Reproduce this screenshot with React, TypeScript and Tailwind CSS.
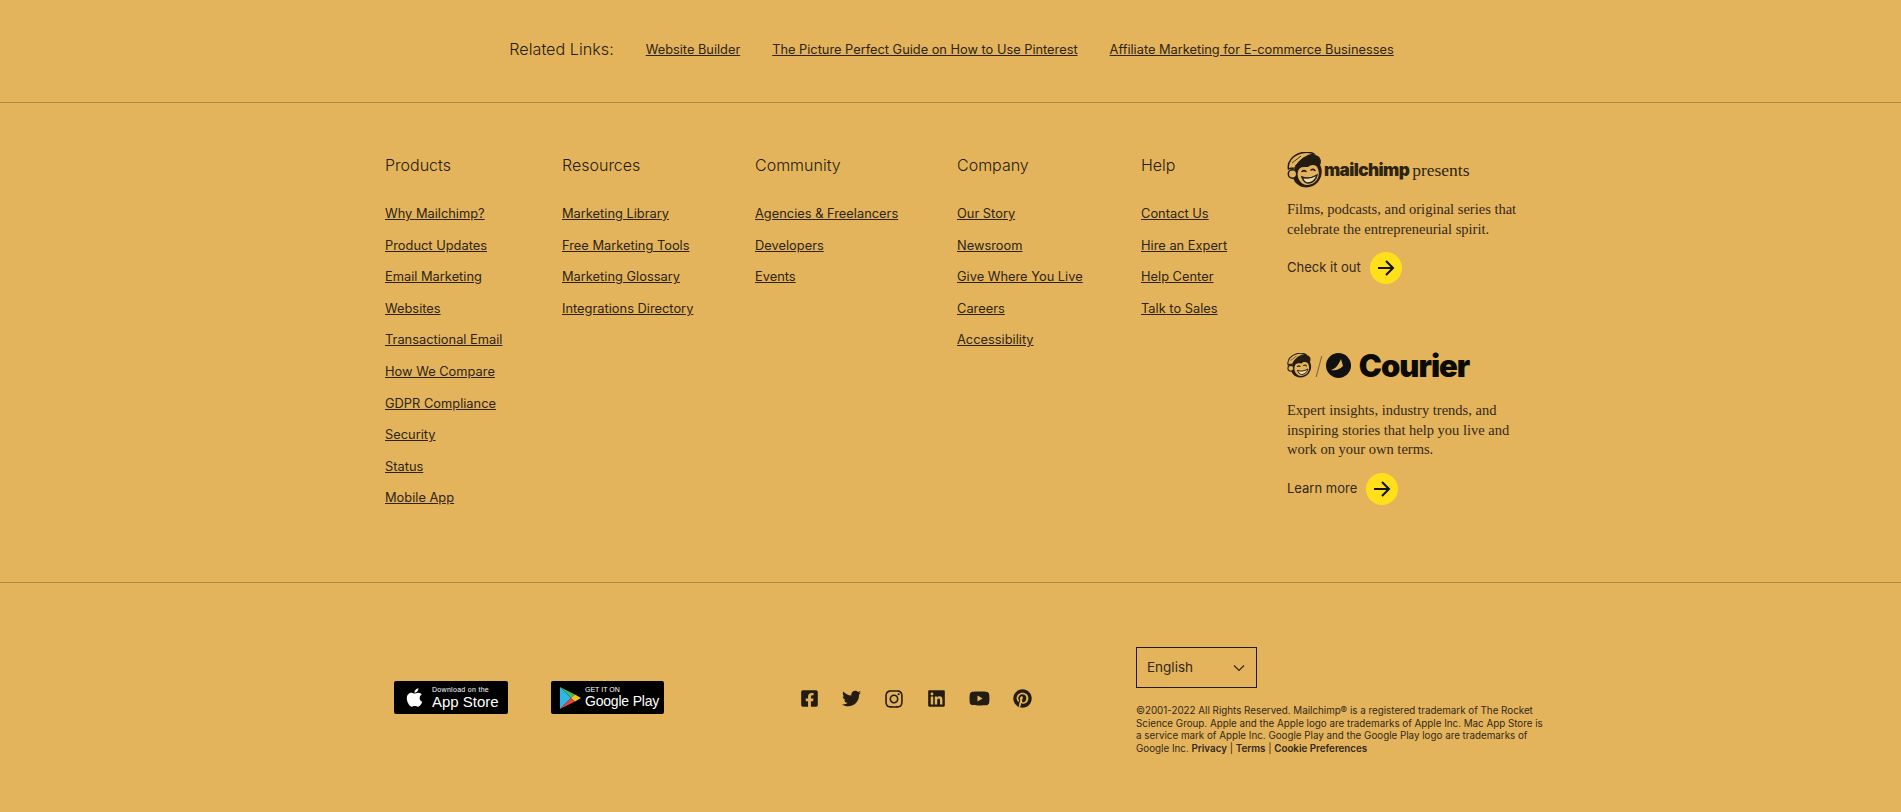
import React from 'react';
import { FaApple, FaFacebookSquare, FaTwitter, FaInstagram, FaLinkedin, FaYoutube, FaPinterest } from 'react-icons/fa';

const columns = [
  { title: 'Products', width: 'w-[177px]', links: ['Why Mailchimp?', 'Product Updates', 'Email Marketing', 'Websites', 'Transactional Email', 'How We Compare', 'GDPR Compliance', 'Security', 'Status', 'Mobile App'] },
  { title: 'Resources', width: 'w-[193px]', links: ['Marketing Library', 'Free Marketing Tools', 'Marketing Glossary', 'Integrations Directory'] },
  { title: 'Community', width: 'w-[202px]', links: ['Agencies & Freelancers', 'Developers', 'Events'] },
  { title: 'Company', width: 'w-[184px]', links: ['Our Story', 'Newsroom', 'Give Where You Live', 'Careers', 'Accessibility'] },
  { title: 'Help', width: 'w-[146px]', links: ['Contact Us', 'Hire an Expert', 'Help Center', 'Talk to Sales'] },
];

// mailchimp's monkey, cap on the upper left and dark head behind the face
const Freddie = ({ size }: { size: number }) => (
  <svg width={size} height={size} viewBox="0 0 36 36">
    <path d="M9 12C14 3 25 1 31 4C35 7 34 11 33 13C36 18 35 25 31 30C27 35 19 37 13 34C9 32 7 29 6 26Z" fill="#241c10" />
    <path d="M1.500 17C0 10 6 3 14 1C19 0 24 0 27 2C20 3 12 8 8 16C6 16 3 16 1.500 17Z" fill="#e4b45c" stroke="#241c10" strokeWidth="1.500" />
    <path d="M5 11L14 4M8 14L18 5" stroke="#241c10" strokeWidth="0.800" />
    <circle cx="5.500" cy="22" r="4.200" fill="#e4b45c" stroke="#241c10" strokeWidth="1.500" />
    <path d="M11 19C13 14 17 15 21 15C24 12 30 12 31 17C34 24 29 33 20 33C15 33 9 27 11 19Z" fill="#e4b45c" />
    <path d="M15 19.500q2-1.800 4 0M24 18q2-1.500 4 .5" fill="none" stroke="#241c10" strokeWidth="1.500" strokeLinecap="round" />
    <path d="M15 25C20 27 25 26 30 23C29 28 25 31 21 31C18 31 16 28 15 25Z" fill="#efdcae" stroke="#241c10" strokeWidth="1.400" />
  </svg>
);

const ArrowCircle = () => (
  <span className="flex h-8 w-8 items-center justify-center rounded-full bg-[#ffe01b]">
    <svg width="20" height="18" viewBox="0 0 20 18" fill="none" stroke="#111" strokeWidth="2">
      <path d="M2 9h15M10 2l7 7-7 7" />
    </svg>
  </span>
);

const GooglePlayMark = () => (
  <svg width="22" height="24" viewBox="0 0 22 24">
    <path d="M1 1L12 12L1 23Z" fill="#2fb5e8" />
    <path d="M1 1L16 8.500L12 12Z" fill="#41b96b" />
    <path d="M1 23L16 15.500L12 12Z" fill="#e8433f" />
    <path d="M16 8.500L22 12L16 15.500L12 12Z" fill="#f9c022" />
  </svg>
);

const serif = "font-['Liberation_Serif',serif]";

export default function App() {
  return (
    <div className="min-h-[812px] bg-[#e4b45c] font-['Inter',sans-serif] text-[#2e2414]">
      <div className="flex h-[103px] items-start justify-center border-b border-[#b08c4a] pt-[38px] pl-[2px]">
        <span className="mr-[32px] text-[16.2px] leading-[22px] font-light text-[#241c10]">Related Links:</span>
        <a className="mr-[32px] pt-[2px] text-[12.8px] leading-[20px] underline">Website Builder</a>
        <a className="mr-[32px] pt-[2px] text-[12.8px] leading-[20px] underline">The Picture Perfect Guide on How to Use Pinterest</a>
        <a className="pt-[2px] text-[12.8px] leading-[20px] underline">Affiliate Marketing for E-commerce Businesses</a>
      </div>

      <div className="h-[480px] border-b border-[#b08c4a]">
        <div className="mx-auto flex w-[1131px] pt-[49px]">
          {columns.map((col) => (
            <div key={col.title} className={`${col.width} shrink-0`}>
              <h3 className="mb-[26px] text-[16px] leading-[26px] font-light text-[#241c10]">{col.title}</h3>
              <ul className="flex flex-col gap-[11.6px]">
                {col.links.map((link) => (
                  <li key={link} className="text-[12.85px] leading-[20px] underline">{link}</li>
                ))}
              </ul>
            </div>
          ))}

          <div className="w-[240px] shrink-0">
            <div className="flex h-[36px] items-center">
              <Freddie size={36} />
              <span className="ml-[1px] text-[17.2px] font-black tracking-[-0.6px]">mailchimp</span>
              <span className={`${serif} ml-[3px] text-[17.5px]`}>presents</span>
            </div>
            <p className={`${serif} mt-[11px] text-[14.5px] leading-[20px] text-[#33281a]`}>
              Films, podcasts, and original series that celebrate the entrepreneurial spirit.
            </p>
            <div className="mt-[12.5px] flex h-[32px] items-center gap-[9px] text-[13px] text-[#33281a]">
              <span>Check it out</span>
              <ArrowCircle />
            </div>

            <div className="mt-[68px] flex h-[28px] items-center">
              <Freddie size={25} />
              <span className="mx-[3px] text-[24px] font-thin leading-none">/</span>
              <svg width="25" height="25" viewBox="0 0 25 25" className="mr-[8px]">
                <circle cx="12.500" cy="12.500" r="12.500" fill="#111" />
                <path d="M5 17C9 16 12 13 15 6L17 13C14 16 10 18 5 17Z" fill="#e4b45c" />
              </svg>
              <span className="text-[31px] leading-none font-black tracking-[-1px] text-[#0c0a05]">Courier</span>
            </div>
            <p className={`${serif} mt-[21.5px] w-[236px] text-[14.5px] leading-[19.6px] text-[#33281a]`}>
              Expert insights, industry trends, and inspiring stories that help you live and work on your own terms.
            </p>
            <div className="mt-[13px] flex h-[32px] items-center gap-[9px] text-[13px] text-[#33281a]">
              <span>Learn more</span>
              <ArrowCircle />
            </div>
          </div>
        </div>
      </div>

      <div className="mx-auto flex w-[1131px] items-start pt-[64px]">
        <div className="mt-[34px] flex shrink-0 pl-[9px]">
          <div className="flex h-[33px] w-[114px] items-center rounded-[2px] bg-black pl-[10px] text-white">
            <FaApple className="text-[21px]" />
            <div className="ml-[7px] flex flex-col font-['Liberation_Sans',sans-serif]">
              <span className="text-[7px] leading-[8px] tracking-[0.3px]">Download on the</span>
              <span className="text-[15px] leading-[15px]">App Store</span>
            </div>
          </div>
          <div className="ml-[43px] flex h-[33px] w-[113px] items-center rounded-[2px] bg-black pl-[8px] text-white">
            <GooglePlayMark />
            <div className="ml-[4px] flex flex-col font-['Liberation_Sans',sans-serif]">
              <span className="text-[7px] leading-[8px]">GET IT ON</span>
              <span className="text-[14px] leading-[15px] tracking-[-0.2px]">Google Play</span>
            </div>
          </div>
        </div>

        <div className="mt-[41px] ml-[136px] flex shrink-0 items-center gap-[23px] text-[#241c10]">
          <FaFacebookSquare className="h-[19px] w-[19px]" />
          <FaTwitter className="h-[19px] w-[19px]" />
          <FaInstagram className="h-[20px] w-[20px]" />
          <FaLinkedin className="h-[19px] w-[19px]" />
          <FaYoutube className="h-[21px] w-[21px]" />
          <FaPinterest className="h-[19px] w-[19px]" />
        </div>

        <div className="ml-[104px] w-[413px] shrink-0">
          <div className="flex h-[41px] w-[121px] items-center justify-between border border-[#241c10] pr-[11px] pl-[10px] text-[13.5px] text-[#33281a]">
            <span>English</span>
            <svg width="12" height="8" viewBox="0 0 12 8" fill="none" stroke="#33281a" strokeWidth="1.2">
              <path d="M1 1.500l5 5 5-5" />
            </svg>
          </div>
          <p className="mt-[17px] text-[9.8px] leading-[12.600px] text-[#33281a]">
            ©2001-2022 All Rights Reserved. Mailchimp® is a registered trademark of The Rocket Science Group. Apple and the Apple logo are trademarks of Apple Inc. Mac App Store is a service mark of Apple Inc. Google Play and the Google Play logo are trademarks of Google Inc. <b className="font-semibold">Privacy</b> | <b className="font-semibold">Terms</b> | <b className="font-semibold">Cookie Preferences</b>
          </p>
        </div>
      </div>
    </div>
  );
}
